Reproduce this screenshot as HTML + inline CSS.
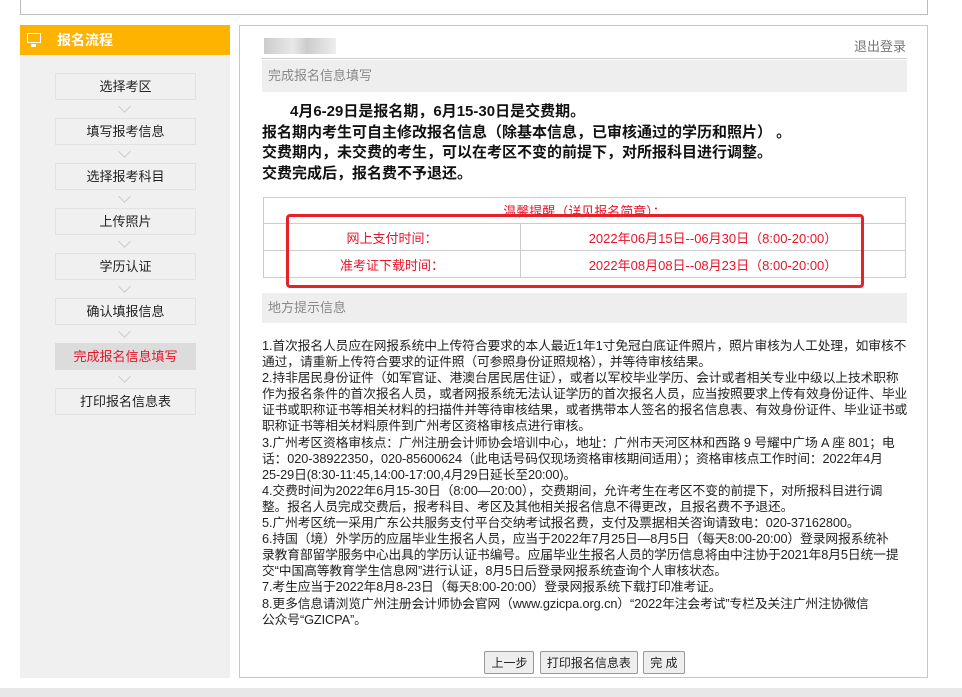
<!DOCTYPE html>
<html><head><meta charset="utf-8"><style>
*{margin:0;padding:0;box-sizing:border-box}
body{width:962px;height:697px;background:#fff;font-family:"Liberation Sans","Microsoft YaHei","Noto Sans CJK SC",sans-serif;position:relative;overflow:hidden;color:#222}
.topbox{position:absolute;left:20px;top:-2px;width:908px;height:17px;border:1px solid #bbb;border-top:none}
.side{position:absolute;left:20px;top:25px;width:210px;height:653px;background:#f0f0f0}
.sh{height:30px;background:#fdb300;color:#fff;font-weight:bold;font-size:14px;line-height:30px;padding-left:37px;position:relative}
.sh i{position:absolute;left:7px;top:8px;width:14px;height:10px;border:1.5px solid #fff}
.sh i:after{content:"";position:absolute;left:3px;top:10px;width:5px;height:3px;background:#fff}
.step{position:absolute;left:35px;width:141px;height:27px;border:1px solid #e2e2e2;background:#f0f0f0;text-align:center;font-size:13px;line-height:26px;color:#222}
.step.on{background:#dcdcdc;color:#e8142a;border-color:#dcdcdc}
.arr{position:absolute;left:100px;width:9px;height:9px;border-right:1px solid #ccc;border-bottom:1px solid #ccc;transform:rotate(45deg)}
.main{position:absolute;left:239px;top:25px;width:689px;height:653px;border:1px solid #c8c8c8}
.blur{position:absolute;left:24px;top:12px;width:72px;height:16px;background:linear-gradient(90deg,#ccc,#e8e8e8 40%,#ccc 60%,#eee)}
.logout{position:absolute;right:21px;top:10px;font-size:13px;color:#777}
.hl{position:absolute;left:22px;top:32px;width:645px;border-top:1px solid #ccc}
.bar{position:absolute;left:22px;width:645px;background:#eee;font-size:13px;color:#888;padding-left:6px}
.bold{position:absolute;left:22px;top:76px;font-size:15px;font-weight:bold;line-height:20.5px;color:#111;white-space:nowrap}
table{position:absolute;left:23px;top:171px;width:643px;border-collapse:collapse;font-size:13px;color:#e8142a}
td{border:1px solid #ccc;height:27px;text-align:center}
.red{position:absolute;left:46px;top:188px;width:578px;height:74px;border:3px solid #e8202a;border-radius:4px}
.txt{position:absolute;left:22px;top:312px;width:660px;font-size:12.75px;line-height:16.1px;color:#222;white-space:nowrap;letter-spacing:-0.1px}
.btns{position:absolute;top:625px;left:0;width:689px;text-align:center;font-size:12px}
.btns span{display:inline-block;border:1px solid #999;background:#eee;padding:2px 6px;margin:0 1px;border-radius:2px}
.foot{position:absolute;left:0;top:688px;width:962px;height:9px;background:#e8e8e8}
</style></head><body>
<div class="topbox"></div>
<div class="side">
<div class="sh"><i></i>报名流程</div>
<div class="step" style="top:48px">选择考区</div><div class="arr" style="top:77px"></div>
<div class="step" style="top:93px">填写报考信息</div><div class="arr" style="top:122px"></div>
<div class="step" style="top:138px">选择报考科目</div><div class="arr" style="top:167px"></div>
<div class="step" style="top:183px">上传照片</div><div class="arr" style="top:212px"></div>
<div class="step" style="top:228px">学历认证</div><div class="arr" style="top:257px"></div>
<div class="step" style="top:273px">确认填报信息</div><div class="arr" style="top:302px"></div>
<div class="step on" style="top:318px">完成报名信息填写</div><div class="arr" style="top:347px"></div>
<div class="step" style="top:363px">打印报名信息表</div>
</div>
<div class="main">
<div class="blur"></div>
<div class="logout">退出登录</div>
<div class="hl"></div>
<div class="bar" style="top:34px;height:32px;line-height:32px">完成报名信息填写</div>
<div class="bold"><span style="padding-left:28px"></span>4月6-29日是报名期，6月15-30日是交费期。<br>报名期内考生可自主修改报名信息（除基本信息，已审核通过的学历和照片）&nbsp;。<br>交费期内，未交费的考生，可以在考区不变的前提下，对所报科目进行调整。<br>交费完成后，报名费不予退还。</div>
<table>
<tr><td colspan="2" style="height:26px">温馨提醒（详见报名简章）：</td></tr>
<tr><td style="width:257px">网上支付时间：</td><td>2022年06月15日--06月30日（8:00-20:00）</td></tr>
<tr><td>准考证下载时间：</td><td>2022年08月08日--08月23日（8:00-20:00）</td></tr>
</table>
<div class="red"></div>
<div class="bar" style="top:267px;height:30px;line-height:30px">地方提示信息</div>
<div class="txt">1.首次报名人员应在网报系统中上传符合要求的本人最近1年1寸免冠白底证件照片，照片审核为人工处理，如审核不<br>通过，请重新上传符合要求的证件照（可参照身份证照规格），并等待审核结果。<br>2.持非居民身份证件（如军官证、港澳台居民居住证），或者以军校毕业学历、会计或者相关专业中级以上技术职称<br>作为报名条件的首次报名人员，或者网报系统无法认证学历的首次报名人员，应当按照要求上传有效身份证件、毕业<br>证书或职称证书等相关材料的扫描件并等待审核结果，或者携带本人签名的报名信息表、有效身份证件、毕业证书或<br>职称证书等相关材料原件到广州考区资格审核点进行审核。<br>3.广州考区资格审核点：广州注册会计师协会培训中心，地址：广州市天河区林和西路 9 号耀中广场 A 座 801；电<br>话：020-38922350，020-85600624（此电话号码仅现场资格审核期间适用）；资格审核点工作时间：2022年4月<br>25-29日(8:30-11:45,14:00-17:00,4月29日延长至20:00)。<br>4.交费时间为2022年6月15-30日（8:00—20:00），交费期间，允许考生在考区不变的前提下，对所报科目进行调<br>整。报名人员完成交费后，报考科目、考区及其他相关报名信息不得更改，且报名费不予退还。<br>5.广州考区统一采用广东公共服务支付平台交纳考试报名费，支付及票据相关咨询请致电：020-37162800。<br>6.持国（境）外学历的应届毕业生报名人员，应当于2022年7月25日—8月5日（每天8:00-20:00）登录网报系统补<br>录教育部留学服务中心出具的学历认证书编号。应届毕业生报名人员的学历信息将由中注协于2021年8月5日统一提<br>交“中国高等教育学生信息网”进行认证，8月5日后登录网报系统查询个人审核状态。<br>7.考生应当于2022年8月8-23日（每天8:00-20:00）登录网报系统下载打印准考证。<br>8.更多信息请浏览广州注册会计师协会官网（www.gzicpa.org.cn）“2022年注会考试”专栏及关注广州注协微信<br>公众号“GZICPA”。</div>
<div class="btns"><span>上一步</span> <span>打印报名信息表</span> <span>完 成</span></div>
</div>
<div class="foot"></div>
</body></html>
